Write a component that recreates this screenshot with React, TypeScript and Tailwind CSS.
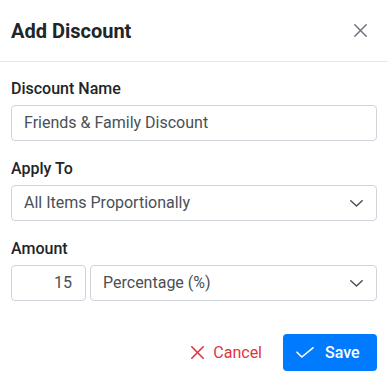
import React from "react";

const Chevron = () => (
  <svg width="13" height="7" viewBox="0 0 13 7" fill="none" className="shrink-0">
    <path d="M0.8 0.8 L6.5 6 L12.2 0.8" stroke="#495057" strokeWidth="1.5" strokeLinecap="round" strokeLinejoin="round" />
  </svg>
);

const XIcon = ({ color, size = 13, width = 1.6 }: { color: string; size?: number; width?: number }) => (
  <svg width={size} height={size} viewBox="0 0 13 13" fill="none" className="shrink-0">
    <path d="M0.8 0.8 L12.2 12.2 M12.2 0.8 L0.8 12.2" stroke={color} strokeWidth={width} strokeLinecap="round" />
  </svg>
);

export default function App() {
  return (
    <div className="w-[388px] h-[382px] bg-white flex flex-col" style={{ fontFamily: "Roboto, 'Liberation Sans', sans-serif" }}>
      <div className="h-[62px] border-b border-[#e5e7ea] flex items-center justify-between pl-[11px] pr-[21px] shrink-0">
        <h1 className="text-[20px] leading-[30px] font-bold text-[#212529]">Add Discount</h1>
        <XIcon color="#6c757d" size={13} width={1.5} />
      </div>
      <div className="px-[11px] pt-[15px] flex flex-col">
        <label className="text-[16px] leading-[24px] font-medium text-[#212529] mb-[4px]">Discount Name</label>
        <div className="h-[36px] border border-[#ced4da] rounded-[4px] flex items-center px-[12px] text-[16px] text-[#495057]">
          Friends &amp; Family Discount
        </div>
        <label className="mt-[16px] text-[16px] leading-[24px] font-medium text-[#212529] mb-[4px]">Apply To</label>
        <div className="h-[36px] border border-[#ced4da] rounded-[4px] flex items-center justify-between pl-[12px] pr-[13px] text-[16px] text-[#495057]">
          <span>All Items Proportionally</span>
          <Chevron />
        </div>
        <label className="mt-[16px] text-[16px] leading-[24px] font-medium text-[#212529] mb-[4px]">Amount</label>
        <div className="flex gap-[4px]">
          <div className="w-[75px] h-[36px] border border-[#ced4da] rounded-[4px] flex items-center justify-end pr-[13px] text-[16px] text-[#495057]">
            15
          </div>
          <div className="flex-1 h-[36px] border border-[#ced4da] rounded-[4px] flex items-center justify-between pl-[12px] pr-[13px] text-[16px] text-[#495057]">
            <span>Percentage (%)</span>
            <Chevron />
          </div>
        </div>
      </div>
      <div className="mt-[33px] px-[11px] flex justify-end items-center">
        <button className="flex items-center gap-[9px] text-[16px] text-[#dc3545] mr-[21px]">
          <XIcon color="#dc3545" size={13} width={1.6} />
          <span>Cancel</span>
        </button>
        <button className="w-[94px] h-[37px] bg-[#007bff] rounded-[4px] flex items-center pl-[13px] gap-[11px] text-white text-[16px] font-medium">
          <svg width="18" height="11" viewBox="0 0 18 11" fill="none" className="shrink-0">
            <path d="M1 5.2 L5.8 10 L17 0.8" stroke="white" strokeWidth="1.6" strokeLinecap="round" strokeLinejoin="round" />
          </svg>
          <span>Save</span>
        </button>
      </div>
    </div>
  );
}
